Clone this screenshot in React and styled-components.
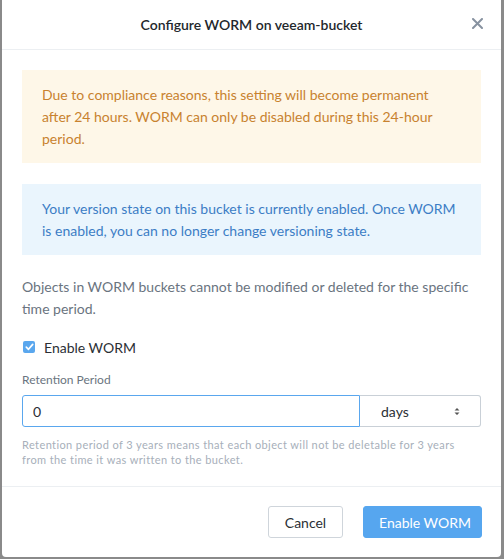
import React, { useState } from 'react';
import styled, { createGlobalStyle } from 'styled-components';

const GlobalStyle = createGlobalStyle`
  html, body {
    margin: 0;
    padding: 0;
    background: #8a8a8a;
    font-family: Lato, "Liberation Sans", sans-serif;
  }
  * {
    box-sizing: border-box;
  }
`;

const App = () => {
  const [enabled, setEnabled] = useState(true);
  const [period, setPeriod] = useState('0');

  return (
    <>
      <GlobalStyle />
      <Modal>
        <Header>
          <Title>Configure WORM on veeam-bucket</Title>
          <CloseButton aria-label="Close">
            <svg width="11" height="11" viewBox="0 0 11 11">
              <path d="M1 1 L10 10 M10 1 L1 10" stroke="#8792a0" strokeWidth="2" strokeLinecap="round" />
            </svg>
          </CloseButton>
        </Header>
        <Body>
          <Alert kind="warning">
            Due to compliance reasons, this setting will become permanent after 24 hours. WORM can only be
            disabled during this 24-hour period.
          </Alert>
          <Alert kind="info">
            Your version state on this bucket is currently enabled. Once WORM is enabled, you can no longer
            change versioning state.
          </Alert>
          <Description>
            Objects in WORM buckets cannot be modified or deleted for the specific time period.
          </Description>
          <CheckRow>
            <CheckBox checked={enabled} onClick={() => setEnabled(!enabled)}>
              {enabled && (
                <svg width="9" height="8" viewBox="0 0 9 8">
                  <path d="M1.3 4.2 L3.5 6.3 L7.7 1.4" fill="none" stroke="#fff" strokeWidth="1.7" strokeLinecap="round" strokeLinejoin="round" />
                </svg>
              )}
            </CheckBox>
            Enable WORM
          </CheckRow>
          <FieldLabel>Retention Period</FieldLabel>
          <InputGroup>
            <NumberInput value={period} onChange={e => setPeriod(e.target.value)} />
            <SelectBox>
              days
              <svg width="6" height="9" viewBox="0 0 6 9">
                <path d="M0.5 3.5 L3 1 L5.5 3.5 Z M0.5 5.5 L3 8 L5.5 5.5 Z" fill="#555" />
              </svg>
            </SelectBox>
          </InputGroup>
          <HelpText>
            Retention period of 3 years means that each object will not be deletable for 3 years from the time
            it was written to the bucket.
          </HelpText>
        </Body>
        <Footer>
          <Button>Cancel</Button>
          <Button primary>Enable WORM</Button>
        </Footer>
      </Modal>
    </>
  );
};

export default App;

const Modal = styled.div`
  width: 499px;
  margin: 0 0 3px 2px;
  background: #fff;
  border-radius: 0 0 4px 4px;
  overflow: hidden;
`;

const Header = styled.div`
  position: relative;
  height: 50px;
  display: flex;
  align-items: center;
  justify-content: center;
  border-bottom: 1px solid #eceff2;
`;

const Title = styled.div`
  font-size: 14px;
  font-weight: 600;
  color: #23272c;
  padding-bottom: 1px;
`;

const CloseButton = styled.button`
  position: absolute;
  right: 18px;
  top: 18px;
  padding: 0;
  border: none;
  background: none;
  display: flex;
  cursor: pointer;
`;

const Body = styled.div`
  padding: 20px 20px 19px 20px;
  display: flex;
  flex-direction: column;
`;

const Alert = styled.div`
  padding: 14px 20px 13px 20px;
  margin-bottom: 21px;
  font-size: 14px;
  line-height: 22px;
  background: ${p => (p.kind === 'warning' ? '#fef7e8' : '#eaf5fd')};
  color: ${p => (p.kind === 'warning' ? '#c8822f' : '#3c7dc5')};
`;

const Description = styled.p`
  margin: 0;
  font-size: 14px;
  line-height: 22px;
  color: #6a7480;
`;

const CheckRow = styled.label`
  display: flex;
  align-items: center;
  gap: 9px;
  margin-top: 16px;
  height: 22px;
  font-size: 14px;
  color: #2b2f35;
`;

const CheckBox = styled.span`
  width: 12px;
  height: 12px;
  margin-left: 1px;
  border-radius: 2px;
  background: ${p => (p.checked ? '#5aa7ee' : '#fff')};
  border: ${p => (p.checked ? 'none' : '1px solid #c5ccd4')};
  display: flex;
  align-items: center;
  justify-content: center;
  cursor: pointer;
`;

const FieldLabel = styled.div`
  margin-top: 14px;
  font-size: 12px;
  line-height: 16px;
  color: #6a7480;
`;

const InputGroup = styled.div`
  display: flex;
  margin-top: 7px;
  height: 32px;
`;

const NumberInput = styled.input`
  flex: 1;
  min-width: 0;
  height: 32px;
  padding: 0 10px;
  font-family: inherit;
  font-size: 14px;
  color: #2b2f35;
  border: 1px solid #5aa7ee;
  border-radius: 3px 0 0 3px;
  outline: none;
`;

const SelectBox = styled.div`
  width: 121px;
  height: 32px;
  padding: 0 20px 0 21px;
  display: flex;
  align-items: center;
  justify-content: space-between;
  font-size: 14px;
  color: #2b2f35;
  border: 1px solid #c9d0d7;
  border-left: none;
  border-radius: 0 3px 3px 0;
`;

const HelpText = styled.div`
  margin-top: 10px;
  font-size: 11px;
  line-height: 15px;
  letter-spacing: 0.4px;
  color: #a7afba;
`;

const Footer = styled.div`
  border-top: 1px solid #eceff2;
  padding: 19px 19px 19px 0;
  display: flex;
  justify-content: flex-end;
  gap: 20px;
`;

const Button = styled.button`
  height: 32px;
  padding: 0 15px;
  min-width: 75px;
  white-space: nowrap;
  font-family: inherit;
  font-size: 14px;
  border-radius: 3px;
  cursor: pointer;
  background: ${p => (p.primary ? '#56a6ef' : '#fff')};
  color: ${p => (p.primary ? '#fff' : '#2b2f35')};
  border: 1px solid ${p => (p.primary ? '#56a6ef' : '#cfd5db')};
  ${p => p.primary && 'width: 119px;'}
`;
